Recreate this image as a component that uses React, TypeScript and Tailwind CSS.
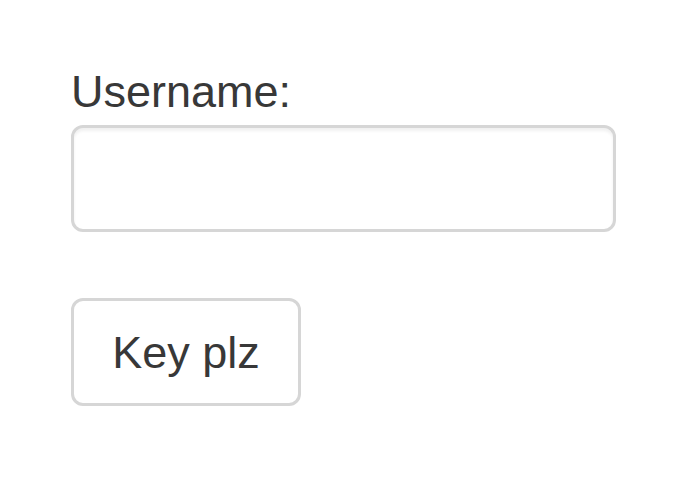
export default function App() {
  return (
    <div
      className="min-h-screen bg-white pt-[60px] pl-[71px] text-[#383838]"
      style={{ fontFamily: '"Liberation Sans", Arial, sans-serif' }}
    >
      <label className="block text-[45px] leading-[63px]">Username:</label>
      <input
        type="text"
        className="mt-[2px] block h-[107px] w-[545px] rounded-[12px] border-[3px] border-[#d6d6d6] bg-white px-[38px] text-[45px] shadow-[inset_0_3px_3px_rgba(0,0,0,0.06)] outline-none"
      />
      <button
        type="button"
        className="mt-[66px] block h-[108px] w-[230px] rounded-[12px] border-[3px] border-[#d6d6d6] bg-white text-[45px] leading-[63px] text-[#383838]"
      >
        Key plz
      </button>
    </div>
  );
}
